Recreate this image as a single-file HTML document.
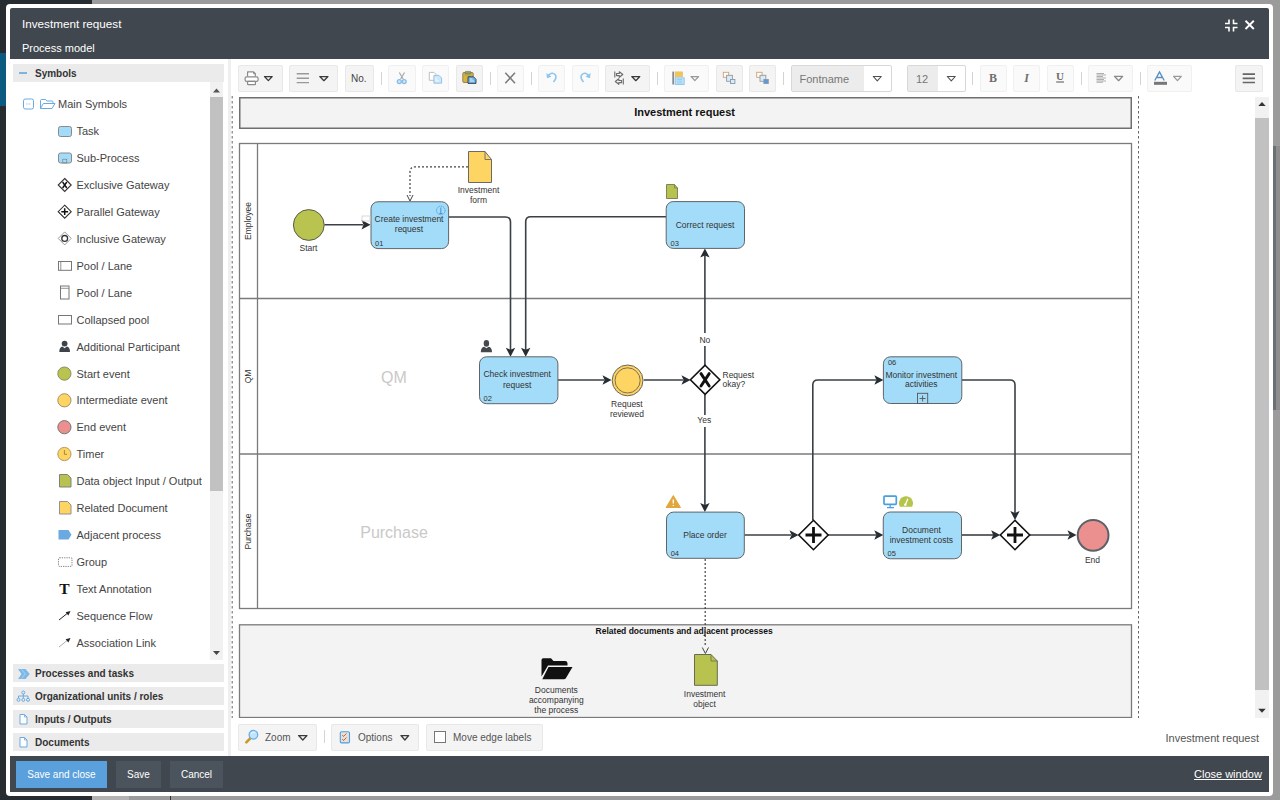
<!DOCTYPE html>
<html><head><meta charset="utf-8">
<style>
*{box-sizing:border-box;margin:0;padding:0}
html,body{width:1280px;height:800px;overflow:hidden;background:#9b9b9b;font-family:"Liberation Sans",sans-serif}
.a{position:absolute}
.t{position:absolute;white-space:nowrap;line-height:1}
#bgdark{left:0;top:0;width:92px;height:800px;background:#272c30}
#bgblue{left:0;top:53px;width:6px;height:53px;background:#0d5a80}
#frame{left:6px;top:4px;width:1267px;height:792px;background:#fff;border-radius:4px}
#hdr{left:10px;top:8px;width:1259px;height:51px;background:#40474e;border-radius:2px 2px 0 0}
#ftr{left:10px;top:756px;width:1259px;height:36px;background:#40474e}
.sect{position:absolute;background:#ebebeb;height:18px;left:13px;width:211px}
.sect .t{left:22px;top:5px;font-weight:bold;font-size:10px;color:#333}
.it{position:absolute;font-size:11px;color:#444;white-space:nowrap;line-height:1;left:76.5px}
.ic{position:absolute;left:56px}
.tb{position:absolute;top:65px;height:27px;background:#f4f4f4;border:1px solid #e8e8e8;border-radius:2px}
.tb.dis{background:#fafafa;border-color:#f0f0f0}
.sep{position:absolute;top:72px;width:1px;height:13px;background:#d4d4d4}
.fb{position:absolute;top:761px;height:27px;color:#fff;font-size:10px;line-height:27px;text-align:center}
</style></head><body>
<div id="bgdark" class="a"></div>
<div id="bgblue" class="a"></div>
<div class="a" style="left:92px;top:796px;width:37px;height:4px;background:#b3b3b3"></div><div class="a" style="left:170px;top:796px;width:1px;height:4px;background:#333"></div>
<div class="a" style="left:1273px;top:146px;width:3px;height:264px;background:#6b7075"></div><div class="a" style="left:1276px;top:146px;width:4px;height:264px;background:#8e8e8e"></div>
<div id="frame" class="a"></div>
<div id="hdr" class="a"></div>
<div class="t" style="left:22px;top:18px;font-size:11.7px;color:#fff">Investment request</div>
<div class="t" style="left:22px;top:42.5px;font-size:11px;color:#fff">Process model</div>
<!-- header icons -->
<svg class="a" style="left:1223px;top:16.5px" width="36" height="16" viewBox="0 0 36 16">
  <g stroke="#fff" stroke-width="1.6" fill="none">
    <path d="M2 6.5H6V2.5"/><path d="M10.5 2.5V6.5H14.5"/><path d="M2 10.5H6V14.5"/><path d="M10.5 14.5V10.5H14.5"/>
    <path d="M22.5 3.8L30.8 12M30.8 3.8L22.5 12" stroke-width="1.9"/>
  </g>
</svg>
<div id="ftr" class="a"></div>
<div class="fb" style="left:16px;width:91px;background:#5aa0dc">Save and close</div>
<div class="fb" style="left:116px;width:45px;background:#4b545c">Save</div>
<div class="fb" style="left:170px;width:53px;background:#4b545c">Cancel</div>
<div class="t" style="left:1194px;top:769px;font-size:11px;color:#fff;text-decoration:underline">Close window</div>

<!-- LEFT PANEL -->
<div class="sect" style="top:64px"><div class="a" style="left:6px;top:8px;width:8px;height:2px;background:#80b4e0"></div><div class="t">Symbols</div></div>
<div class="sect" style="top:664px"><div class="t">Processes and tasks</div></div>
<div class="sect" style="top:687px"><div class="t">Organizational units / roles</div></div>
<div class="sect" style="top:710px"><div class="t">Inputs / Outputs</div></div>
<div class="sect" style="top:733px"><div class="t">Documents</div></div>
<div class="a" style="left:228px;top:59px;width:3px;height:697px;background:#efefef"></div>
<!-- scrollbar left -->
<div class="a" style="left:210px;top:82px;width:13px;height:578px;background:#f1f1f1"></div>
<div class="a" style="left:210px;top:97px;width:13px;height:394px;background:#c1c1c1"></div>
<div class="it" style="left:58px;top:99px">Main Symbols</div>
<div class="it" style="top:126.4px">Task</div>
<div class="it" style="top:153.3px">Sub-Process</div>
<div class="it" style="top:180.2px">Exclusive Gateway</div>
<div class="it" style="top:207.1px">Parallel Gateway</div>
<div class="it" style="top:234.0px">Inclusive Gateway</div>
<div class="it" style="top:260.9px">Pool / Lane</div>
<div class="it" style="top:287.8px">Pool / Lane</div>
<div class="it" style="top:314.7px">Collapsed pool</div>
<div class="it" style="top:341.6px">Additional Participant</div>
<div class="it" style="top:368.5px">Start event</div>
<div class="it" style="top:395.4px">Intermediate event</div>
<div class="it" style="top:422.3px">End event</div>
<div class="it" style="top:449.2px">Timer</div>
<div class="it" style="top:476.1px">Data object Input / Output</div>
<div class="it" style="top:503.0px">Related Document</div>
<div class="it" style="top:529.9px">Adjacent process</div>
<div class="it" style="top:556.8px">Group</div>
<div class="it" style="top:583.7px">Text Annotation</div>
<div class="it" style="top:610.6px">Sequence Flow</div>
<div class="it" style="top:637.5px">Association Link</div>

<!-- TOOLBAR -->
<div class="tb" style="left:238px;width:45px"></div>
<div class="tb" style="left:289px;width:49px"></div>
<div class="tb" style="left:345px;width:29px"></div>
<div class="t" style="left:351px;top:74px;font-size:10px;color:#444">No.</div>
<div class="sep" style="left:381px"></div>
<div class="tb dis" style="left:388px;width:28px"></div>
<div class="tb dis" style="left:422px;width:27px"></div>
<div class="tb" style="left:456px;width:27px"></div>
<div class="sep" style="left:490px"></div>
<div class="tb dis" style="left:497px;width:27px"></div>
<div class="sep" style="left:531px"></div>
<div class="tb dis" style="left:538px;width:27px"></div>
<div class="tb dis" style="left:572px;width:27px"></div>
<div class="tb" style="left:605px;width:45px"></div>
<div class="sep" style="left:657px"></div>
<div class="tb dis" style="left:664px;width:45px"></div>
<div class="tb" style="left:716px;width:27px"></div>
<div class="tb" style="left:749px;width:27px"></div>
<div class="sep" style="left:783px"></div>
<div class="tb" style="left:791px;width:101px;background:#fff;border-color:#d8d8d8"><div class="a" style="left:0;top:0;width:72px;height:25px;background:#ececec"></div></div>
<div class="t" style="left:799.5px;top:74px;font-size:11px;color:#777">Fontname</div>
<div class="tb" style="left:907px;width:59px;background:#fff;border-color:#d8d8d8"><div class="a" style="left:0;top:0;width:30px;height:25px;background:#ececec"></div></div>
<div class="t" style="left:916px;top:74px;font-size:11px;color:#777">12</div>
<div class="sep" style="left:972px"></div>
<div class="tb dis" style="left:980px;width:27px"></div>
<div class="tb dis" style="left:1013px;width:27px"></div>
<div class="tb dis" style="left:1047px;width:27px"></div>
<div class="sep" style="left:1081px"></div>
<div class="tb dis" style="left:1088px;width:45px"></div>
<div class="sep" style="left:1140px"></div>
<div class="tb dis" style="left:1147px;width:45px"></div>
<div class="tb" style="left:1235px;width:28px"></div>

<svg class="a" style="left:10px;top:59px" width="216" height="697" viewBox="10 59 216 697">
<path d="M213 92.5 L216.5 88.5 L220 92.5 Z" fill="#555"/>
<path d="M213 651 L216.5 655 L220 651 Z" fill="#444"/>
<rect x="23.5" y="99" width="10" height="10" rx="1.8" fill="#fff" stroke="#6aaae0" stroke-width="1"/>
<path d="M26 104 H31" stroke="#8fb9dc" stroke-width="0.8" stroke-dasharray="1 0.6"/>
<path d="M40.5 108.5 V100.5 Q40.5 99.5 41.5 99.5 H45.5 L47 101 H52 Q53 101 53 102 V103.5" fill="none" stroke="#6aaae0" stroke-width="1"/>
<path d="M40.5 108.5 L43.3 103.5 H55 L52 108.5 Z" fill="#fff" stroke="#6aaae0" stroke-width="1" stroke-linejoin="round"/>
<rect x="58.5" y="126.5" width="13" height="10" rx="2" fill="#a3dcf8" stroke="#8a8a8a" stroke-width="1"/>
<rect x="58.5" y="153" width="13" height="10" rx="2" fill="#a3dcf8" stroke="#8a8a8a" stroke-width="1"/>
<rect x="62.8" y="159.2" width="4" height="3.8" fill="none" stroke="#777" stroke-width="0.6"/>
<path d="M64.7 178.5 L71.2 185 L64.7 191.5 L58.2 185 Z" fill="#fff" stroke="#333" stroke-width="1.1"/>
<path d="M62.6 182 L66.8 188 M66.8 182 L62.6 188" stroke="#111" stroke-width="1.4"/>
<path d="M64.7 205.2 L71.2 211.7 L64.7 218.2 L58.2 211.7 Z" fill="#fff" stroke="#333" stroke-width="1.1"/>
<path d="M64.7 208.3 V215.1 M61.3 211.7 H68.1" stroke="#111" stroke-width="1.5"/>
<path d="M64.7 231.9 L71.2 238.4 L64.7 244.9 L58.2 238.4 Z" fill="#fff" stroke="#999" stroke-width="1"/>
<circle cx="64.7" cy="238.4" r="2.9" fill="none" stroke="#333" stroke-width="1.3"/>
<rect x="58.5" y="261.5" width="13" height="8.8" fill="#fff" stroke="#777" stroke-width="1"/>
<path d="M60.8 261.5 V270.3" stroke="#777" stroke-width="0.8"/>
<rect x="60.5" y="286" width="8.5" height="13" fill="#fff" stroke="#777" stroke-width="1"/>
<path d="M60.5 288.3 H69" stroke="#777" stroke-width="0.8"/>
<rect x="58.5" y="315.5" width="13" height="8.5" fill="#fff" stroke="#777" stroke-width="1"/>
<g fill="#3d4349"><circle cx="64.6" cy="343.6" r="2.9"/><path d="M59.3 352 Q59.3 347.3 62.4 346.6 L64.6 348.2 L66.8 346.6 Q70 347.3 70 352 Z"/></g>
<circle cx="64.4" cy="373.6" r="6.6" fill="#b8c44f" stroke="#8d8f62" stroke-width="1"/>
<circle cx="64.4" cy="400.3" r="6.6" fill="#fed462" stroke="#a59368" stroke-width="1"/>
<circle cx="64.4" cy="427.2" r="6.6" fill="#ec8f8f" stroke="#777" stroke-width="1"/>
<circle cx="64.4" cy="454" r="6.6" fill="#fed462" stroke="#b39a5a" stroke-width="1"/>
<path d="M64.4 450 V454.3 H67" fill="none" stroke="#8a7440" stroke-width="0.8"/>
<path d="M59.5 474.5 H67.5 L71 478 V487 H59.5 Z" fill="#b8c34f" stroke="#777" stroke-width="0.9"/>
<path d="M59.5 501.5 H67.5 L71 505 V514 H59.5 Z" fill="#fed462" stroke="#888" stroke-width="0.9"/>
<path d="M58.5 530 H68.5 L71.5 534.8 L68.5 539.6 H58.5 Z" fill="#6aaae0"/>
<rect x="58.5" y="557.8" width="13.5" height="8.6" rx="1" fill="none" stroke="#777" stroke-width="0.9" stroke-dasharray="1.3 1"/>
<text x="64.3" y="594" font-family="Liberation Serif" font-weight="bold" font-size="15.5" text-anchor="middle" fill="#111">T</text>
<path d="M59 620 L67.5 613.2" stroke="#222" stroke-width="1"/>
<path d="M70.5 611 L65.6 612.2 L68.4 615.4 Z" fill="#222"/>
<path d="M59 647 L67.5 640.2" stroke="#999" stroke-width="0.8"/>
<path d="M70.5 638 L65.6 639.2 L68.4 642.4 Z" fill="#222"/>
<path d="M18 669 H25.5 L29.8 674 L25.5 679 H18 L21.5 674 Z" fill="#7db8e6"/><path d="M21.5 669.5 L25.3 674 L21.5 678.5" fill="none" stroke="#b9d9f2" stroke-width="0.8"/>
<g fill="none" stroke="#6aaae0" stroke-width="1"><circle cx="23.3" cy="692.5" r="1.5"/><path d="M23.3 694 V696 M18.5 698 V696 H28 V698 M23.3 696 V698"/><circle cx="18.5" cy="699.8" r="1.5"/><circle cx="23.3" cy="699.8" r="1.5"/><circle cx="28" cy="699.8" r="1.5"/></g>
<path d="M20 714.5 H24.5 L27 717.0 V724.0 H20 Z" fill="#fff" stroke="#6aaae0" stroke-width="1" stroke-linejoin="round"/><path d="M24.5 714.5 V717.0 H27" fill="none" stroke="#6aaae0" stroke-width="0.8"/>
<path d="M20 737.5 H24.5 L27 740.0 V747.0 H20 Z" fill="#fff" stroke="#6aaae0" stroke-width="1" stroke-linejoin="round"/><path d="M24.5 737.5 V740.0 H27" fill="none" stroke="#6aaae0" stroke-width="0.8"/>
</svg>
<svg class="a" style="left:231px;top:95px" width="1024" height="623" viewBox="231 95 1024 623" font-family="Liberation Sans, sans-serif">
<line x1="232.2" y1="96" x2="232.2" y2="718" stroke="#666" stroke-width="1" stroke-dasharray="2.5 2.5"/>
<line x1="1138.5" y1="96" x2="1138.5" y2="718" stroke="#666" stroke-width="1" stroke-dasharray="2.5 2.5"/>
<rect x="239.75" y="97.75" width="891.5" height="30.5" fill="#f3f3f3" stroke="#6f6f6f" stroke-width="1.5"/>
<text x="684.60" y="116.00" font-size="11" text-anchor="middle" font-weight="bold" fill="#111" >Investment request</text>
<rect x="239.5" y="143.5" width="892" height="465" fill="#fff" stroke="#7a7a7a" stroke-width="1.3"/>
<line x1="257.5" y1="143.5" x2="257.5" y2="608.5" stroke="#7a7a7a" stroke-width="1.3"/>
<line x1="239.5" y1="298.5" x2="1131.5" y2="298.5" stroke="#7a7a7a" stroke-width="1.3"/>
<line x1="239.5" y1="454" x2="1131.5" y2="454" stroke="#7a7a7a" stroke-width="1.3"/>
<text transform="translate(251.3 221) rotate(-90)" font-size="8.5" text-anchor="middle" fill="#333">Employee</text>
<text transform="translate(251.3 376.5) rotate(-90)" font-size="8.5" text-anchor="middle" fill="#333">QM</text>
<text transform="translate(251.3 531.5) rotate(-90)" font-size="8.5" text-anchor="middle" fill="#333">Purchase</text>
<text x="394.00" y="383.00" font-size="16" text-anchor="middle" font-weight="normal" fill="#c9c9c9" >QM</text>
<text x="394.00" y="538.00" font-size="16" text-anchor="middle" font-weight="normal" fill="#c9c9c9" >Purchase</text>
<rect x="239.5" y="624.8" width="892" height="92.7" fill="#f3f3f3" stroke="#7a7a7a" stroke-width="1.3"/>
<text x="684.20" y="634.20" font-size="8.5" text-anchor="middle" font-weight="bold" fill="#111" >Related documents and adjacent processes</text>
<path d="M324.4 224.8 H363" fill="none" stroke="#3a4046" stroke-width="1.6"/>
<path d="M370.50 224.80 L361.50 220.10 L363.50 224.80 L361.50 229.50 Z" fill="#262d33"/>
<path d="M448.6 217 H505.5 Q510.5 217 510.5 222 V350" fill="none" stroke="#3a4046" stroke-width="1.6"/>
<path d="M510.50 356.80 L505.80 347.80 L510.50 349.80 L515.20 347.80 Z" fill="#262d33"/>
<path d="M666.2 216.7 H530.7 Q525.7 216.7 525.7 221.7 V350" fill="none" stroke="#3a4046" stroke-width="1.6"/>
<path d="M525.70 356.80 L521.00 347.80 L525.70 349.80 L530.40 347.80 Z" fill="#262d33"/>
<path d="M557.9 380 H604" fill="none" stroke="#3a4046" stroke-width="1.6"/>
<path d="M611.50 380.00 L602.50 375.30 L604.50 380.00 L602.50 384.70 Z" fill="#262d33"/>
<path d="M643.7 380 H683" fill="none" stroke="#3a4046" stroke-width="1.6"/>
<path d="M690.50 380.00 L681.50 375.30 L683.50 380.00 L681.50 384.70 Z" fill="#262d33"/>
<path d="M704.9 365 V346 M704.9 333 V255" fill="none" stroke="#3a4046" stroke-width="1.6"/>
<path d="M704.90 248.40 L700.20 257.40 L704.90 255.40 L709.60 257.40 Z" fill="#262d33"/>
<path d="M704.9 394.6 V415 M704.9 427 V505" fill="none" stroke="#3a4046" stroke-width="1.6"/>
<path d="M704.90 512.00 L700.20 503.00 L704.90 505.00 L709.60 503.00 Z" fill="#262d33"/>
<path d="M744.3 535 H791" fill="none" stroke="#3a4046" stroke-width="1.6"/>
<path d="M798.50 535.00 L789.50 530.30 L791.50 535.00 L789.50 539.70 Z" fill="#262d33"/>
<path d="M828 535 H876" fill="none" stroke="#3a4046" stroke-width="1.6"/>
<path d="M883.30 535.00 L874.30 530.30 L876.30 535.00 L874.30 539.70 Z" fill="#262d33"/>
<path d="M812.8 520 V385 Q812.8 380 817.8 380 H876" fill="none" stroke="#3a4046" stroke-width="1.6"/>
<path d="M883.40 380.00 L874.40 375.30 L876.40 380.00 L874.40 384.70 Z" fill="#262d33"/>
<path d="M961.8 380 H1010 Q1015 380 1015 385 V513" fill="none" stroke="#3a4046" stroke-width="1.6"/>
<path d="M1015.00 520.00 L1010.30 511.00 L1015.00 513.00 L1019.70 511.00 Z" fill="#262d33"/>
<path d="M961.5 535 H993" fill="none" stroke="#3a4046" stroke-width="1.6"/>
<path d="M1000.20 535.00 L991.20 530.30 L993.20 535.00 L991.20 539.70 Z" fill="#262d33"/>
<path d="M1030 535 H1069" fill="none" stroke="#3a4046" stroke-width="1.6"/>
<path d="M1076.50 535.00 L1067.50 530.30 L1069.50 535.00 L1067.50 539.70 Z" fill="#262d33"/>
<path d="M468 166.9 H415 Q410 166.9 410 172 V196" fill="none" stroke="#444" stroke-width="1.2" stroke-dasharray="2 2"/>
<path d="M407 195 L410 201 L413 195" fill="none" stroke="#444" stroke-width="1"/>
<path d="M705.2 559 V647" fill="none" stroke="#444" stroke-width="1.2" stroke-dasharray="2 2"/>
<path d="M702.3 647.5 L705.4 653.5 L708.5 647.5" fill="none" stroke="#444" stroke-width="1"/>
<circle cx="308.8" cy="225" r="15.4" fill="#b8c44f" stroke="#5c5c4c" stroke-width="1"/>
<text x="308.50" y="251.40" font-size="8.5" text-anchor="middle" font-weight="normal" fill="#333" >Start</text>
<rect x="371.00" y="201.75" width="77.60" height="46.85" rx="7" fill="#a3dcf8" stroke="#5f6468" stroke-width="1"/>
<text x="409.00" y="221.80" font-size="8.5" text-anchor="middle" font-weight="normal" fill="#333" >Create investment</text>
<text x="409.00" y="231.80" font-size="8.5" text-anchor="middle" font-weight="normal" fill="#333" >request</text>
<text x="375.00" y="245.60" font-size="7.5" text-anchor="start" font-weight="normal" fill="#333" >01</text>
<circle cx="440.8" cy="210.4" r="4.3" fill="none" stroke="#4a90d8" stroke-width="0.9" stroke-dasharray="1.2 0.8"/>
<path d="M440.8 207.5 V213.5 M439.3 213.5 H442.3" stroke="#4a90d8" stroke-width="1"/>
<rect x="362" y="216" width="8" height="5" fill="none" stroke="#d0d0d0" stroke-width="0.8"/>
<path d="M468.5 151.5 H485 L491.5 159.5 V182.5 H468.5 Z" fill="#fed462" stroke="#6a6a6a" stroke-width="1"/>
<path d="M485 151.5 V159.5 H491.5" fill="none" stroke="#6a6a6a" stroke-width="0.9"/>
<text x="478.50" y="193.40" font-size="8.5" text-anchor="middle" font-weight="normal" fill="#333" >Investment</text>
<text x="478.50" y="203.20" font-size="8.5" text-anchor="middle" font-weight="normal" fill="#333" >form</text>
<rect x="666.20" y="201.60" width="78.30" height="46.80" rx="7" fill="#a3dcf8" stroke="#5f6468" stroke-width="1"/>
<text x="705.00" y="227.80" font-size="8.5" text-anchor="middle" font-weight="normal" fill="#333" >Correct request</text>
<text x="670.50" y="245.60" font-size="7.5" text-anchor="start" font-weight="normal" fill="#333" >03</text>
<path d="M666.5 184.5 H674.5 L677.5 188 V198.5 H666.5 Z" fill="#b8c34f" stroke="#6a6a50" stroke-width="0.8"/><path d="M674.5 184.5 V188 H677.5" fill="none" stroke="#6a6a50" stroke-width="0.6"/>
<rect x="479.50" y="356.80" width="78.40" height="46.90" rx="7" fill="#a3dcf8" stroke="#5f6468" stroke-width="1"/>
<text x="517.20" y="377.40" font-size="8.5" text-anchor="middle" font-weight="normal" fill="#333" >Check investment</text>
<text x="517.20" y="387.50" font-size="8.5" text-anchor="middle" font-weight="normal" fill="#333" >request</text>
<text x="483.50" y="400.80" font-size="7.5" text-anchor="start" font-weight="normal" fill="#333" >02</text>
<g fill="#45494e"><ellipse cx="486.4" cy="343.4" rx="2.7" ry="3.3"/><path d="M480.8 352.2 Q480.8 347.5 484.2 346.8 L486.4 348.3 L488.6 346.8 Q492 347.5 492 352.2 Z"/></g>
<circle cx="627.6" cy="380.4" r="15.4" fill="#fed462" stroke="#6c6555" stroke-width="1"/>
<circle cx="627.6" cy="380.4" r="12.6" fill="none" stroke="#6c6555" stroke-width="0.9"/>
<text x="626.90" y="406.80" font-size="8.5" text-anchor="middle" font-weight="normal" fill="#333" >Request</text>
<text x="626.90" y="416.80" font-size="8.5" text-anchor="middle" font-weight="normal" fill="#333" >reviewed</text>
<path d="M705.1 365.2 L719.8 379.8 L705.1 394.4 L690.4 379.8 Z" fill="#fff" stroke="#111" stroke-width="1.6"/>
<path d="M701 373.6 L709.2 386 M709.2 373.6 L701 386" stroke="#111" stroke-width="2.9" stroke-linecap="round"/>
<text x="722.50" y="377.60" font-size="8.5" text-anchor="start" font-weight="normal" fill="#333" >Request</text>
<text x="722.50" y="387.00" font-size="8.5" text-anchor="start" font-weight="normal" fill="#333" >okay?</text>
<text x="704.90" y="343.00" font-size="8.5" text-anchor="middle" font-weight="normal" fill="#333" >No</text>
<text x="704.30" y="423.40" font-size="8.5" text-anchor="middle" font-weight="normal" fill="#333" >Yes</text>
<rect x="666.50" y="512.10" width="77.80" height="46.20" rx="7" fill="#a3dcf8" stroke="#5f6468" stroke-width="1"/>
<text x="705.00" y="537.80" font-size="8.5" text-anchor="middle" font-weight="normal" fill="#333" >Place order</text>
<text x="670.70" y="555.70" font-size="7.5" text-anchor="start" font-weight="normal" fill="#333" >04</text>
<path d="M673.3 495.8 L680.3 507.5 H666.3 Z" fill="#e0a83c" stroke="#e0a83c" stroke-width="1.2" stroke-linejoin="round"/>
<path d="M673.3 499.5 V503.5 M673.3 505 V506" stroke="#fff" stroke-width="1.3"/>
<path d="M813.45 520.3 L828.15 535 L813.45 549.7 L798.75 535 Z" fill="#fff" stroke="#111" stroke-width="1.6"/>
<path d="M813.5 527 V543 M805.5 535 H821.5" stroke="#111" stroke-width="2.8"/>
<path d="M1015.00 520.3 L1029.70 535 L1015.00 549.7 L1000.30 535 Z" fill="#fff" stroke="#111" stroke-width="1.6"/>
<path d="M1015.0 527 V543 M1007.0 535 H1023.0" stroke="#111" stroke-width="2.8"/>
<rect x="883.40" y="356.80" width="78.40" height="46.70" rx="7" fill="#a3dcf8" stroke="#5f6468" stroke-width="1"/>
<text x="887.90" y="365.30" font-size="7.5" text-anchor="start" font-weight="normal" fill="#333" >06</text>
<text x="921.30" y="377.50" font-size="8.5" text-anchor="middle" font-weight="normal" fill="#333" >Monitor investment</text>
<text x="921.30" y="387.40" font-size="8.5" text-anchor="middle" font-weight="normal" fill="#333" >activities</text>
<rect x="917.5" y="393.3" width="10.2" height="10.2" fill="none" stroke="#555" stroke-width="0.9"/>
<path d="M922.6 395.5 V401.5 M919.6 398.5 H925.6" stroke="#555" stroke-width="0.9"/>
<rect x="883.25" y="512.00" width="78.25" height="46.75" rx="7" fill="#a3dcf8" stroke="#5f6468" stroke-width="1"/>
<text x="921.40" y="532.50" font-size="8.5" text-anchor="middle" font-weight="normal" fill="#333" >Document</text>
<text x="921.40" y="542.50" font-size="8.5" text-anchor="middle" font-weight="normal" fill="#333" >investment costs</text>
<text x="887.50" y="556.20" font-size="7.5" text-anchor="start" font-weight="normal" fill="#333" >05</text>
<rect x="884" y="496.2" width="12.3" height="8.1" rx="0.8" fill="#fff" stroke="#4a9fe0" stroke-width="1.7"/>
<path d="M890.2 505 V507.3 M887 507.6 H894" stroke="#4a9fe0" stroke-width="1.2"/>
<path d="M899.9 506.8 A7 7 0 1 1 912.1 506.8 Z" fill="#b5c44a"/>
<path d="M905.3 505 L907.8 498.8" stroke="#fff" stroke-width="1.3"/><circle cx="905.3" cy="504.8" r="1.2" fill="#fff"/>
<circle cx="1093.1" cy="535.3" r="15.4" fill="#ec8f8f" stroke="#5a6268" stroke-width="2"/>
<text x="1092.50" y="562.50" font-size="8.5" text-anchor="middle" font-weight="normal" fill="#333" >End</text>
<path d="M541.5 660 Q541.5 658.3 543.2 658.3 H551 L553.5 661 H565 Q567.5 661 567.5 663.2 V665.5 H548 L541.5 676.5 Z" fill="#111"/>
<path d="M548.5 667 H572.5 L566 678 Q565.3 679.3 563.8 679.3 H542.3 Z" fill="#111"/>
<text x="556.30" y="692.90" font-size="8.5" text-anchor="middle" font-weight="normal" fill="#333" >Documents</text>
<text x="556.30" y="702.50" font-size="8.5" text-anchor="middle" font-weight="normal" fill="#333" >accompanying</text>
<text x="556.30" y="713.00" font-size="8.5" text-anchor="middle" font-weight="normal" fill="#333" >the process</text>
<path d="M694.5 654.5 H711 L717.3 661 V685.3 H694.5 Z" fill="#b8c34f" stroke="#6a6a50" stroke-width="1"/>
<path d="M711 654.5 V661 H717.3" fill="none" stroke="#6a6a50" stroke-width="0.8"/>
<text x="704.60" y="696.50" font-size="8.5" text-anchor="middle" font-weight="normal" fill="#333" >Investment</text>
<text x="704.60" y="706.50" font-size="8.5" text-anchor="middle" font-weight="normal" fill="#333" >object</text>
</svg>
<!-- CANVAS -->
<div class="a" style="left:1255px;top:97px;width:14px;height:621px;background:#f1f1f1"></div>
<div class="a" style="left:1255px;top:118px;width:14px;height:572px;background:#c1c1c1"></div>

<!-- STATUS -->
<div class="tb" style="left:238px;top:724px;width:79px"></div>
<div class="t" style="left:265px;top:733px;font-size:10px;color:#555">Zoom</div>
<div class="sep" style="left:324px;top:730px"></div>
<div class="tb" style="left:331px;top:724px;width:88px"></div>
<div class="t" style="left:358px;top:733px;font-size:10px;color:#555">Options</div>
<div class="tb" style="left:426px;top:724px;width:117px"></div>
<div class="a" style="left:434px;top:731px;width:12px;height:12px;border:1px solid #777;background:#fff"></div>
<div class="t" style="left:453px;top:733px;font-size:10px;color:#555">Move edge labels</div>
<div class="t" style="left:1165.5px;top:732.5px;font-size:11px;color:#555">Investment request</div>

<svg class="a" style="left:231px;top:59px" width="1038" height="36" viewBox="231 59 1038 36">
<g fill="#fff" stroke="#8a8a8a" stroke-width="1.2" stroke-linejoin="round">
<path d="M247.6 76.6 V71.9 H253.5 L255.3 73.7 V76.6"/>
<rect x="245.1" y="76.8" width="13" height="4.6" rx="1.6"/>
<rect x="247.6" y="81.4" width="7.8" height="3.2" rx="0.6"/>
</g>
<path d="M253.5 71.9 V73.7 H255.3" fill="#8a8a8a" stroke="#8a8a8a" stroke-width="0.8"/>
<path d="M264.50 76.50 H272.20 L268.35 80.70 Z" fill="none" stroke="#3a3a3a" stroke-width="1.25" stroke-linejoin="round"/>
<path d="M296.7 73.8 H309 M296.7 78.2 H309 M296.7 82.6 H309" stroke="#999" stroke-width="1.4"/>
<path d="M319.80 76.50 H328.00 L323.90 80.70 Z" fill="none" stroke="#3a3a3a" stroke-width="1.25" stroke-linejoin="round"/>
<path d="M399.3 72.5 L403.2 79 M404.5 72.5 L400.6 79" stroke="#a8a8a8" stroke-width="1.2"/>
<circle cx="399.3" cy="81.6" r="2" fill="#cfe6f8" stroke="#86bde8" stroke-width="1.3"/>
<circle cx="404.2" cy="81.6" r="2" fill="#cfe6f8" stroke="#86bde8" stroke-width="1.3"/>
<path d="M429.3 72.4 H434 L436 74.4 V80.3 H429.3 Z" fill="#fff" stroke="#b9b9b9" stroke-width="0.9"/>
<path d="M433.9 75.4 H439 L441.6 78 V83.2 H433.9 Z" fill="#cfe6f8" stroke="#8dc0e8" stroke-width="0.9"/>
<path d="M436 77.5 V81 H439" fill="none" stroke="#fff" stroke-width="0.8"/>
<rect x="462.8" y="72.5" width="10.4" height="10" rx="1" fill="#d9b23e" stroke="#8d7a52" stroke-width="0.9"/>
<rect x="465.2" y="71.4" width="5.6" height="2.6" rx="0.6" fill="#9a9a6a" stroke="#6d6d50" stroke-width="0.6"/>
<path d="M464.5 75 H471" stroke="#8ab04a" stroke-width="1"/>
<path d="M468 76.8 H473.5 L476 79.3 V83.4 H468 Z" fill="#6fb4e6" stroke="#2d3b48" stroke-width="0.9"/>
<path d="M470 79 H472.5 M470 81 H474" stroke="#fff" stroke-width="0.8"/>
<path d="M505.3 72.8 L515 83.3 M515 72.8 L505.3 83.3" stroke="#7a7a7a" stroke-width="1.5"/>
<path d="M548.5 75.5 Q552 71.5 555 74.5 Q557.5 77.5 553.5 82" fill="none" stroke="#8cc6ee" stroke-width="1.6"/>
<path d="M546.4 73 L547 78.3 L551.5 76.8 Z" fill="#8cc6ee"/>
<path d="M588.5 75.5 Q585 71.5 582 74.5 Q579.5 77.5 583.5 82" fill="none" stroke="#8cc6ee" stroke-width="1.6"/>
<path d="M590.6 73 L590 78.3 L585.5 76.8 Z" fill="#8cc6ee"/>
<g fill="none" stroke="#6a6a6a" stroke-width="1.1" stroke-linejoin="round">
<path d="M614.8 71.5 V77.5"/><path d="M616.5 73.5 H619.3 V71.8 L622.8 74.5 L619.3 77.3 V75.6 H616.5 Z"/>
<path d="M623.3 78.5 V84.6"/><path d="M621.6 80.5 H618.8 V78.8 L615.3 81.5 L618.8 84.3 V82.6 H621.6 Z"/>
</g>
<path d="M631.80 76.50 H639.80 L635.80 80.70 Z" fill="none" stroke="#3a3a3a" stroke-width="1.25" stroke-linejoin="round"/>
<rect x="672.3" y="71.6" width="1.8" height="12.9" fill="#8a8a8a"/>
<rect x="675.2" y="71.9" width="7.4" height="4.8" fill="#f4c74a" stroke="#d8b880" stroke-width="0.6"/>
<rect x="675.2" y="77.8" width="9" height="6.6" fill="#bfe2f9" stroke="#7fc0ee" stroke-width="0.8"/>
<path d="M677 79.5 H682 M677 81.2 H682 M677 82.9 H682" stroke="#7fc0ee" stroke-width="0.6"/>
<path d="M691.10 76.50 H698.60 L694.85 80.70 Z" fill="none" stroke="#9a9a9a" stroke-width="1.25" stroke-linejoin="round"/>
<rect x="723.3" y="72.3" width="5.4" height="5" fill="#fff" stroke="#d0a070" stroke-width="0.9"/>
<rect x="726.6" y="75.3" width="5.8" height="6" fill="#d6ecfb" stroke="#999" stroke-width="0.9"/>
<rect x="730.5" y="79.5" width="4.4" height="4" fill="#d6ecfb" stroke="#8899aa" stroke-width="0.9"/>
<rect x="756.7" y="72.3" width="5.4" height="5" fill="#fff" stroke="#d0a070" stroke-width="0.9"/>
<rect x="760.0" y="75.3" width="5.8" height="6" fill="#d6ecfb" stroke="#999" stroke-width="0.9"/>
<rect x="763.9" y="79.5" width="4.4" height="4" fill="#5a9ad8" stroke="#8899aa" stroke-width="0.9"/>
<text x="993" y="81.8" font-family="Liberation Serif" font-weight="bold" font-size="12" text-anchor="middle" fill="#6e6e6e">B</text>
<text x="1026.5" y="81.8" font-family="Liberation Serif" font-weight="bold" font-style="italic" font-size="12" text-anchor="middle" fill="#6e6e6e">I</text>
<text x="1060.1" y="80.3" font-family="Liberation Serif" font-weight="bold" font-size="11" text-anchor="middle" fill="#6e6e6e">U</text>
<path d="M1056.2 82 H1064" stroke="#8a8a8a" stroke-width="1.5"/>
<path d="M1096.5 73.5 H1104 M1096.5 75 H1106 M1096.5 76.5 H1103 M1096.5 78 H1106 M1096.5 79.5 H1104 M1096.5 81 H1106 M1096.5 82.3 H1103" stroke="#a6a6a6" stroke-width="0.9"/>
<path d="M1114.50 76.30 H1122.70 L1118.60 80.70 Z" fill="none" stroke="#8a8a8a" stroke-width="1.25" stroke-linejoin="round"/>
<path d="M1154.8 80.5 L1159.5 72 L1164.2 80.5 M1156.6 77.5 H1162.4" fill="none" stroke="#5a90c0" stroke-width="1.4"/>
<rect x="1154" y="81.8" width="13" height="3" fill="#777"/>
<path d="M1173.60 76.30 H1181.30 L1177.45 80.70 Z" fill="none" stroke="#9a9a9a" stroke-width="1.25" stroke-linejoin="round"/>
<path d="M873.30 76.50 H881.30 L877.30 80.90 Z" fill="none" stroke="#505050" stroke-width="1.1" stroke-linejoin="round"/>
<path d="M947.30 76.50 H955.30 L951.30 80.90 Z" fill="none" stroke="#505050" stroke-width="1.1" stroke-linejoin="round"/>
<path d="M1242.7 74.2 H1255 M1242.7 78.3 H1255 M1242.7 82.5 H1255" stroke="#666" stroke-width="1.7"/>
</svg>
<svg class="a" style="left:1255px;top:95px" width="14" height="623" viewBox="1255 95 14 623"><path d="M1258.3 106 L1262 102 L1265.7 106 Z" fill="#333"/><path d="M1258.3 708.8 L1262 712.8 L1265.7 708.8 Z" fill="#333"/></svg>
<svg class="a" style="left:231px;top:718px" width="330" height="38" viewBox="231 718 330 38">
<path d="M246.3 742.3 L250.6 738" stroke="#c99a2a" stroke-width="2.6" stroke-linecap="round"/>
<circle cx="253.4" cy="734.8" r="4.3" fill="#bfe4fb" stroke="#6ab0e0" stroke-width="1.3"/>
<path d="M251 733.5 Q252.5 731.5 254.8 732.2" fill="none" stroke="#fff" stroke-width="1"/>
<path d="M298.60 735.50 H307.00 L302.80 740.00 Z" fill="none" stroke="#3a3a3a" stroke-width="1.25" stroke-linejoin="round"/>
<rect x="340.3" y="731.7" width="9.2" height="11.2" rx="1.3" fill="#e8e0d0" stroke="#4a9fe8" stroke-width="1.1"/>
<path d="M342.3 735 L343.5 736.5 L346.5 733.5 M342.3 739 L343.5 740.5 L346.5 737.5" fill="none" stroke="#c0504a" stroke-width="0.9"/>
<path d="M401.00 735.50 H408.70 L404.85 740.00 Z" fill="none" stroke="#3a3a3a" stroke-width="1.25" stroke-linejoin="round"/>
</svg>
</body></html>
